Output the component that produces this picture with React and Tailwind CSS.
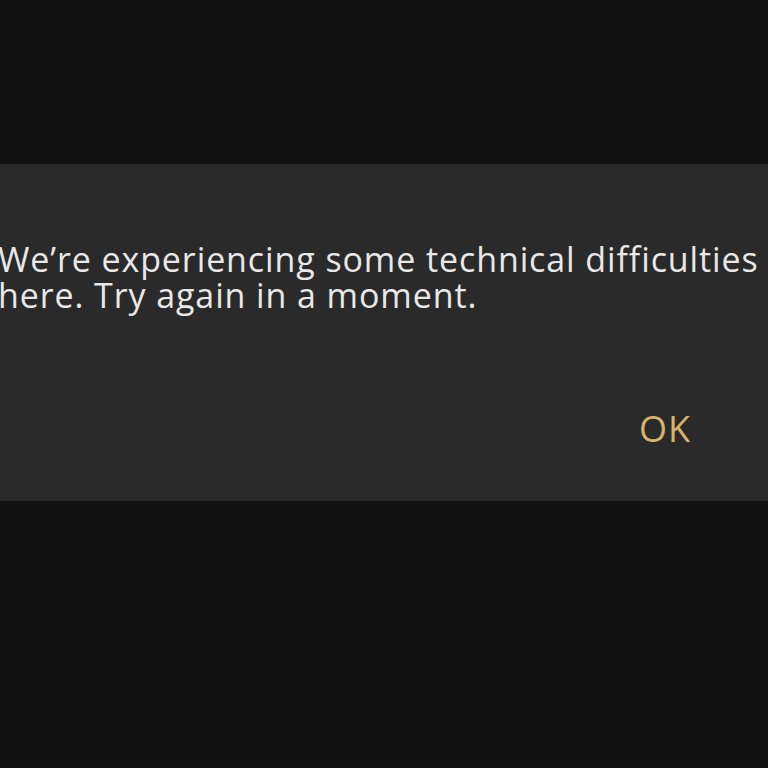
export default function App() {
  return (
    <div className="w-[768px] h-[768px] bg-[#111111] flex flex-col overflow-hidden" style={{ fontFamily: '"Open Sans", "Liberation Sans", sans-serif' }}>
      <div className="h-[164px] shrink-0" />
      <div className="h-[337px] shrink-0 bg-[#2a2a2a] flex flex-col">
        <div className="pt-[77px] -ml-[2px] text-[34px] leading-[36px] text-[#e8e8e8] whitespace-nowrap tracking-[0.9px]">
          <div>We’re experiencing some technical difficulties</div>
          <div>here. Try again in a moment.</div>
        </div>
        <div className="flex justify-end pr-[77px] pt-[98px]">
          <span className="text-[36px] leading-none text-[#d8b46a] tracking-[1px]">OK</span>
        </div>
      </div>
    </div>
  );
}
